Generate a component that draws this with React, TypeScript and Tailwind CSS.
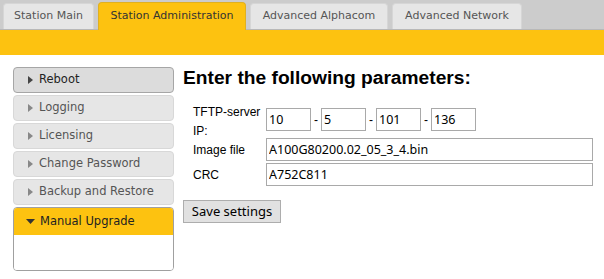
import React from "react";

const tabs = [
  { label: "Station Main", w: "w-[91px]" },
  { label: "Station Administration", w: "w-[148px]" },
  { label: "Advanced Alphacom", w: "w-[138px]" },
  { label: "Advanced Network", w: "w-[130px]" },
];
const menu = ["Reboot", "Logging", "Licensing", "Change Password", "Backup and Restore"];

function Arrow({ down = false, color }: { down?: boolean; color: string }) {
  return down ? (
    <svg width="9" height="6" viewBox="0 0 9 6" className="shrink-0">
      <path d="M0 0 H9 L4.5 5 Z" fill={color} />
    </svg>
  ) : (
    <svg width="5" height="8" viewBox="0 0 5 8" className="shrink-0">
      <path d="M0 0 L5 4 L0 8 Z" fill={color} />
    </svg>
  );
}

function Field({ value, className = "" }: { value: string; className?: string }) {
  return (
    <input
      readOnly
      value={value}
      className={`h-[23px] border border-[#a9a9a9] bg-white px-[2px] text-[12.5px] text-black outline-none font-['Noto_Sans','DejaVu_Sans',sans-serif] ${className}`}
    />
  );
}

export default function App() {
  return (
    <div className="w-[604px] h-[279px] bg-white overflow-hidden font-['DejaVu_Sans',Verdana,sans-serif]">
      {/* tab strip */}
      <div className="h-[30px] bg-[#cccccc] border-b border-[#b8b8b8] flex items-end gap-[4px] pl-[3px]">
        {tabs.map((t, i) =>
          i === 1 ? (
            <div
              key={t.label}
              className={`${t.w} h-[28px] -mb-px flex items-center justify-center rounded-t-[4px] bg-[#fdc210] border border-b-0 border-[#e0b020] text-[11px] text-[#333]`}
            >
              {t.label}
            </div>
          ) : (
            <div
              key={t.label}
              className={`${t.w} h-[26px] flex items-center justify-center rounded-t-[4px] bg-[#e6e6e6] border border-b-0 border-[#d6d6d6] text-[11px] text-[#555]`}
            >
              {t.label}
            </div>
          )
        )}
      </div>
      <div className="h-[25px] bg-[#fdc210]" />

      <div className="flex pt-[12px]">
        {/* side menu */}
        <div className="w-[161px] ml-[13px] flex flex-col gap-[2px]">
          {menu.map((m, i) => (
            <div
              key={m}
              className={`h-[26px] rounded-[4px] border flex items-center gap-[6px] pl-[14px] text-[11.5px] ${
                i === 0
                  ? "bg-[#dcdcdc] border-[#a6a6a6] text-[#222]"
                  : "bg-[#e6e6e6] border-[#d8d8d8] text-[#555]"
              }`}
            >
              <Arrow color={i === 0 ? "#444" : "#888"} />
              {m}
            </div>
          ))}
          <div className="rounded-[4px] border border-[#a0a0a0] overflow-hidden">
            <div className="h-[27px] bg-[#fdc210] flex items-center gap-[5px] pl-[12px] text-[11.5px] text-[#222]">
              <Arrow down color="#333" />
              Manual Upgrade
            </div>
            <div className="h-[35px] bg-white" />
          </div>
        </div>

        {/* form */}
        <div className="ml-[9px] font-['Liberation_Sans',Arial,sans-serif]">
          <h1 className="text-[19.2px] font-bold text-black leading-[22px]">Enter the following parameters:</h1>
          <div className="ml-[10px] flex flex-col">
            <div className="mt-[14px] h-[28px] flex items-start">
              <div className="w-[73px] text-[12px] leading-[19px] text-black">
                TFTP-server
                <br />
                IP:
              </div>
              <div className="mt-[5px] flex items-center">
                <Field value="10" className="w-[45px]" />
                <span className="w-[10px] text-center text-[12px]">-</span>
                <Field value="5" className="w-[45px]" />
                <span className="w-[10px] text-center text-[12px]">-</span>
                <Field value="101" className="w-[45px]" />
                <span className="w-[10px] text-center text-[12px]">-</span>
                <Field value="136" className="w-[45px]" />
              </div>
            </div>
            <div className="flex items-center mt-[7px]">
              <div className="w-[73px] text-[12px] text-black">Image file</div>
              <Field value="A100G80200.02_05_3_4.bin" className="w-[327px]" />
            </div>
            <div className="flex items-center mt-[2px]">
              <div className="w-[73px] text-[12px] text-black">CRC</div>
              <Field value="A752C811" className="w-[327px]" />
            </div>
          </div>
          <button className="mt-[14px] h-[23px] w-[98px] bg-[#e1e1e1] border border-[#adadad] text-[13px] text-black font-['Noto_Sans','DejaVu_Sans',sans-serif]">
            Save settings
          </button>
        </div>
      </div>
    </div>
  );
}
